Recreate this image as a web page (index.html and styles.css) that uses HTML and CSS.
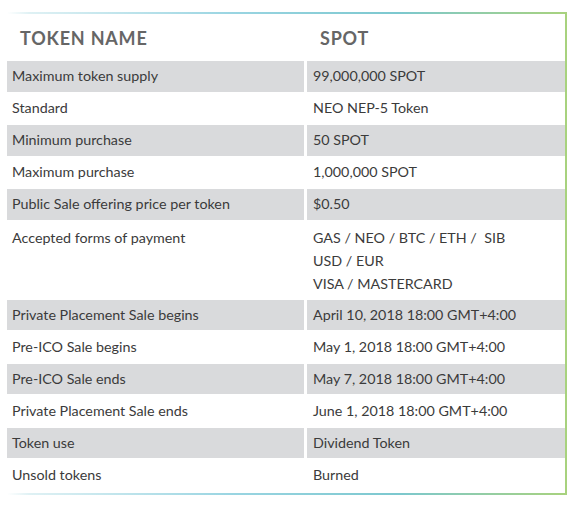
FILE: index.html
```html
<!DOCTYPE html>
<html>
<head>
<meta charset="utf-8">
<link rel="stylesheet" href="styles.css">
</head>
<body>
<div class="page">
  <div class="box">
    <div class="head">
      <div class="hcell">TOKEN NAME</div>
      <div class="hcell hright">SPOT</div>
    </div>
    <div class="row gray"><div class="cell">Maximum token supply</div><div class="cell right">99,000,000 SPOT</div></div>
    <div class="row"><div class="cell">Standard</div><div class="cell right">NEO NEP-5 Token</div></div>
    <div class="row gray"><div class="cell">Minimum purchase</div><div class="cell right">50 SPOT</div></div>
    <div class="row"><div class="cell">Maximum purchase</div><div class="cell right">1,000,000 SPOT</div></div>
    <div class="row gray"><div class="cell">Public Sale offering price per token</div><div class="cell right">$0.50</div></div>
    <div class="row multi"><div class="cell">Accepted forms of payment</div><div class="cell right">GAS / NEO / BTC / ETH / &nbsp;SIB<br>USD / EUR<br>VISA / MASTERCARD</div></div>
    <div class="row gray"><div class="cell">Private Placement Sale begins</div><div class="cell right">April 10, 2018 18:00 GMT+4:00</div></div>
    <div class="row"><div class="cell">Pre-ICO Sale begins</div><div class="cell right">May 1, 2018 18:00 GMT+4:00</div></div>
    <div class="row gray"><div class="cell">Pre-ICO Sale ends</div><div class="cell right">May 7, 2018 18:00 GMT+4:00</div></div>
    <div class="row"><div class="cell">Private Placement Sale ends</div><div class="cell right">June 1, 2018 18:00 GMT+4:00</div></div>
    <div class="row gray"><div class="cell">Token use</div><div class="cell right">Dividend Token</div></div>
    <div class="row last"><div class="cell">Unsold tokens</div><div class="cell right">Burned</div></div>
  </div>
</div>
</body>
</html>
```
FILE: styles.css
```css
html, body {
  margin: 0;
  padding: 0;
  background: #ffffff;
}
.page {
  padding: 12px 0 0 7px;
  width: 560px;
}
.box {
  border-right: 2px solid #a8d27e;
  padding: 2px 0 2px 0;
  background:
    linear-gradient(to right, rgba(255,255,255,0) 0%, #dff1f4 4%, #9ad5e2 40%, #7cc8cf 70%, #a8d27e 100%) top left / 100% 2px no-repeat,
    linear-gradient(to right, rgba(255,255,255,0) 0%, #dff1f4 4%, #9ad5e2 40%, #7cc8cf 70%, #a8d27e 100%) bottom left / 100% 2px no-repeat;
  font-family: Lato, "Noto Sans", sans-serif;
  color: #3b3b3b;
  font-size: 14.3px;
}
.head {
  display: grid;
  grid-template-columns: 297px 1fr;
  column-gap: 3px;
  height: 47px;
  align-items: center;
}
.hcell {
  font-weight: 700;
  font-size: 18px;
  color: #666666;
  padding-left: 13px;
  letter-spacing: 0.8px;
}
.hright {
  padding-left: 13px;
}
.row {
  display: grid;
  grid-template-columns: 297px 1fr;
  column-gap: 3px;
  line-height: 20px;
}
.cell {
  padding: 6.5px 0 7px 5px;
}
.cell.right {
  padding-left: 6px;
}
.gray .cell {
  background: #d9dadc;
  padding-top: 5px;
  padding-bottom: 5.5px;
}
.multi .cell {
  line-height: 23px;
  padding-top: 6px;
  padding-bottom: 5px;
}
.last .cell {
  padding-bottom: 8px;
}
```
